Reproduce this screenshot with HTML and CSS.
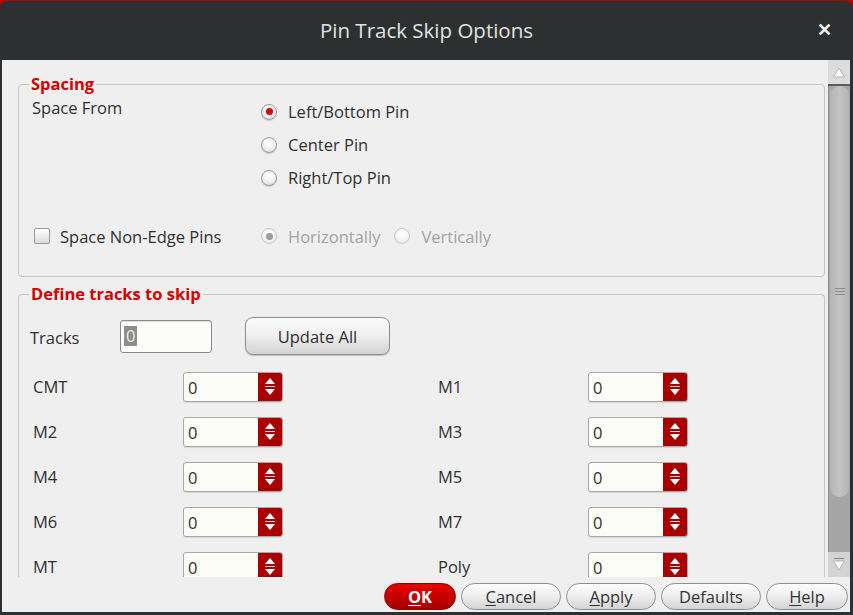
FILE: index.html
```html
<!DOCTYPE html>
<html>
<head>
<meta charset="utf-8">
<link rel="stylesheet" href="styles.css">
</head>
<body>
<div class="window">
  <header class="titlebar">
    <span></span>
    <span class="title">Pin Track Skip Options</span>
    <span class="close">&#x2715;</span>
  </header>
  <div class="client">
    <div class="viewport">
      <div class="scroll-content">
        <fieldset class="group spacing">
          <legend>Spacing</legend>
          <div class="sp-grid">
            <div class="sp-label">Space From</div>
            <div class="radio-list">
              <div class="radio-row"><span class="radio checked"></span><span>Left/Bottom Pin</span></div>
              <div class="radio-row"><span class="radio"></span><span>Center Pin</span></div>
              <div class="radio-row"><span class="radio"></span><span>Right/Top Pin</span></div>
            </div>
          </div>
          <div class="sp-grid nonedge">
            <div class="check-row"><span class="checkbox"></span><span>Space Non-Edge Pins</span></div>
            <div class="dir-radios">
              <span class="radio disabled checked"></span><span class="dis">Horizontally</span>
              <span class="radio disabled"></span><span class="dis">Vertically</span>
            </div>
          </div>
        </fieldset>
        <fieldset class="group tracks">
          <legend>Define tracks to skip</legend>
          <div class="tracks-row">
            <span class="tracks-label">Tracks</span>
            <div class="tracks-input"><span class="sel">0</span></div>
            <button class="btn update">Update All</button>
          </div>
          <div class="layer-grid">
            <span class="lname">CMT</span><div class="spin"><span class="val">0</span><span class="arrows"><svg width="24" height="28" viewBox="0 0 24 28"><path d="M7 11 L12 5 L17 11 Z" fill="#fff"/><path d="M7 13.5 H17" stroke="#f3d0d0" stroke-width="1"/><path d="M7 16 H17 L12 22 Z" fill="#fff"/></svg></span></div>
            <span></span>
            <span class="lname">M1</span><div class="spin"><span class="val">0</span><span class="arrows"><svg width="24" height="28" viewBox="0 0 24 28"><path d="M7 11 L12 5 L17 11 Z" fill="#fff"/><path d="M7 13.5 H17" stroke="#f3d0d0" stroke-width="1"/><path d="M7 16 H17 L12 22 Z" fill="#fff"/></svg></span></div>

            <span class="lname">M2</span><div class="spin"><span class="val">0</span><span class="arrows"><svg width="24" height="28" viewBox="0 0 24 28"><path d="M7 11 L12 5 L17 11 Z" fill="#fff"/><path d="M7 13.5 H17" stroke="#f3d0d0" stroke-width="1"/><path d="M7 16 H17 L12 22 Z" fill="#fff"/></svg></span></div>
            <span></span>
            <span class="lname">M3</span><div class="spin"><span class="val">0</span><span class="arrows"><svg width="24" height="28" viewBox="0 0 24 28"><path d="M7 11 L12 5 L17 11 Z" fill="#fff"/><path d="M7 13.5 H17" stroke="#f3d0d0" stroke-width="1"/><path d="M7 16 H17 L12 22 Z" fill="#fff"/></svg></span></div>

            <span class="lname">M4</span><div class="spin"><span class="val">0</span><span class="arrows"><svg width="24" height="28" viewBox="0 0 24 28"><path d="M7 11 L12 5 L17 11 Z" fill="#fff"/><path d="M7 13.5 H17" stroke="#f3d0d0" stroke-width="1"/><path d="M7 16 H17 L12 22 Z" fill="#fff"/></svg></span></div>
            <span></span>
            <span class="lname">M5</span><div class="spin"><span class="val">0</span><span class="arrows"><svg width="24" height="28" viewBox="0 0 24 28"><path d="M7 11 L12 5 L17 11 Z" fill="#fff"/><path d="M7 13.5 H17" stroke="#f3d0d0" stroke-width="1"/><path d="M7 16 H17 L12 22 Z" fill="#fff"/></svg></span></div>

            <span class="lname">M6</span><div class="spin"><span class="val">0</span><span class="arrows"><svg width="24" height="28" viewBox="0 0 24 28"><path d="M7 11 L12 5 L17 11 Z" fill="#fff"/><path d="M7 13.5 H17" stroke="#f3d0d0" stroke-width="1"/><path d="M7 16 H17 L12 22 Z" fill="#fff"/></svg></span></div>
            <span></span>
            <span class="lname">M7</span><div class="spin"><span class="val">0</span><span class="arrows"><svg width="24" height="28" viewBox="0 0 24 28"><path d="M7 11 L12 5 L17 11 Z" fill="#fff"/><path d="M7 13.5 H17" stroke="#f3d0d0" stroke-width="1"/><path d="M7 16 H17 L12 22 Z" fill="#fff"/></svg></span></div>

            <span class="lname">MT</span><div class="spin"><span class="val">0</span><span class="arrows"><svg width="24" height="28" viewBox="0 0 24 28"><path d="M7 11 L12 5 L17 11 Z" fill="#fff"/><path d="M7 13.5 H17" stroke="#f3d0d0" stroke-width="1"/><path d="M7 16 H17 L12 22 Z" fill="#fff"/></svg></span></div>
            <span></span>
            <span class="lname">Poly</span><div class="spin"><span class="val">0</span><span class="arrows"><svg width="24" height="28" viewBox="0 0 24 28"><path d="M7 11 L12 5 L17 11 Z" fill="#fff"/><path d="M7 13.5 H17" stroke="#f3d0d0" stroke-width="1"/><path d="M7 16 H17 L12 22 Z" fill="#fff"/></svg></span></div>
          </div>
        </fieldset>
      </div>
      <div class="scrollbar">
        <div class="sb-up"><svg width="22" height="24" viewBox="0 0 22 24"><path d="M5.5 17 L11 8 L16.5 17 Z" fill="#fafafa" stroke="#b5b5b5" stroke-width="1"/></svg></div>
        <div class="sb-trough">
          <div class="sb-thumb">
            <svg class="grip" width="12" height="10" viewBox="0 0 12 10"><path d="M1 1.5 H11 M1 4.5 H11 M1 7.5 H11" stroke="#8a8a8a" stroke-width="1"/></svg>
          </div>
        </div>
        <div class="sb-down"><svg width="22" height="25" viewBox="0 0 22 25"><path d="M6 6.5 H16" stroke="#888" stroke-width="1"/><path d="M5.5 9 H16.5 L11 18 Z" fill="#fafafa" stroke="#b5b5b5" stroke-width="1"/></svg></div>
      </div>
    </div>
    <div class="buttonbar">
      <button class="pill ok"><u>O</u>K</button>
      <button class="pill cancel"><u>C</u>ancel</button>
      <button class="pill apply"><u>A</u>pply</button>
      <button class="pill defaults">Defaults</button>
      <button class="pill help"><u>H</u>elp</button>
    </div>
  </div>
</div>
</body>
</html>
```

FILE: styles.css
```css
html, body {
  margin: 0;
  padding: 0;
  width: 853px;
  height: 615px;
  overflow: hidden;
  background: #b80000;
  font-family: "Open Sans", "Noto Sans", sans-serif;
  font-size: 16.5px;
  color: #2f2f2f;
}

.window {
  width: 853px;
  height: 615px;
  display: flex;
  flex-direction: column;
}

.titlebar {
  height: 56px;
  margin-top: 1px;
  flex: none;
  background: #2d3031;
  border-radius: 8px 8px 0 0;
  display: grid;
  grid-template-columns: 1fr auto 1fr;
  align-items: center;
  color: #e2e2e2;
}

.title {
  font-size: 20.5px;
  padding-top: 2px;
}

.close {
  justify-self: end;
  padding-right: 21px;
  font-size: 18px;
  font-weight: bold;
  color: #f2f2f2;
}

.client {
  flex: 1;
  background: #2d3031;
  padding: 3px 3px 3px 2px;
  display: flex;
  flex-direction: column;
  min-height: 0;
}

.viewport {
  height: 517px;
  flex: none;
  display: flex;
  background: #efefef;
}

.scroll-content {
  flex: 1;
  overflow: hidden;
  padding-top: 14px;
}

.group {
  margin: 0 3px 0 16px;
  padding: 0;
  border: 1px solid #c6c6c6;
  border-radius: 4px;
  min-width: 0;
}

.group legend {
  margin-left: 10px;
  padding: 0 2px;
  color: #d40000;
  font-weight: bold;
  font-size: 16.5px;
  line-height: 20px;
}

.sp-grid {
  display: grid;
  grid-template-columns: 229px auto;
  padding: 1px 0 0 13px;
}

.sp-label {
  margin-top: 3px;
  line-height: 20px;
}

.radio-row {
  height: 33px;
  display: flex;
  align-items: center;
  gap: 11px;
}

.radio {
  width: 16px;
  height: 16px;
  box-sizing: border-box;
  border-radius: 50%;
  border: 1px solid #9a9a9a;
  background: radial-gradient(circle at 50% 35%, #ffffff 0%, #f3f3f3 45%, #cfcfcf 100%);
  box-shadow: 0 1px 1px rgba(0,0,0,0.15);
  display: inline-flex;
  align-items: center;
  justify-content: center;
  flex: none;
}

.radio.checked::after {
  content: "";
  width: 7px;
  height: 7px;
  border-radius: 50%;
  background: #d80000;
}

.radio.disabled {
  border-color: #c6c6c6;
  background: radial-gradient(circle at 50% 35%, #ffffff 0%, #f5f5f5 50%, #dcdcdc 100%);
  box-shadow: none;
}

.radio.disabled.checked::after {
  background: #9e9e9e;
}

.nonedge {
  margin-top: 27px;
  padding-top: 0;
  padding-bottom: 25px;
  height: 30px;
  align-items: center;
}

.check-row {
  display: flex;
  align-items: center;
  gap: 10px;
  padding-left: 2px;
}

.checkbox {
  width: 16px;
  height: 16px;
  box-sizing: border-box;
  border: 1px solid #9a9a9a;
  border-radius: 2px;
  background: linear-gradient(#ffffff, #dadada);
  flex: none;
}

.dir-radios {
  display: flex;
  align-items: center;
}

.dir-radios .dis {
  color: #a3a3a3;
  margin-left: 11px;
  margin-right: 14px;
}

.tracks {
  margin-top: 7px;
  height: 320px;
  border-bottom: none;
}

.tracks-row {
  display: flex;
  align-items: center;
  height: 38px;
  margin-top: 13px;
  padding-left: 11px;
}

.tracks-label {
  width: 90px;
  padding-top: 3px;
}

.tracks-input {
  width: 92px;
  height: 33px;
  box-sizing: border-box;
  border: 1px solid #8a8a8a;
  border-radius: 3px;
  background: #fcfcfa;
  box-shadow: inset 0 1px 1px rgba(0,0,0,0.12);
  display: flex;
  align-items: center;
  padding-left: 3px;
}

.tracks-input .sel {
  background: #8c8c8c;
  color: #e8e8e8;
  padding: 0 2px;
  line-height: 20px;
}

.btn {
  font: inherit;
  color: #2f2f2f;
}

.update {
  margin-left: 33px;
  width: 145px;
  height: 38px;
  border: 1px solid #8e8e8e;
  border-radius: 8px;
  background: linear-gradient(#fbfbfb, #f0f0f0 45%, #d3d3d3);
  box-shadow: 0 1px 1px rgba(0,0,0,0.2);
}

.layer-grid {
  display: grid;
  grid-template-columns: 150px 100px 155px 150px 100px;
  grid-auto-rows: 30px;
  row-gap: 15px;
  margin-top: 17px;
  padding-left: 14px;
  align-items: center;
}

.lname {
  line-height: 20px;
}

.spin {
  height: 30px;
  box-sizing: border-box;
  display: flex;
  border: 1px solid #a8a8a8;
  border-radius: 3px;
  background: #fcfdf6;
  box-shadow: 0 1px 1px rgba(0,0,0,0.1);
  overflow: hidden;
}

.spin .val {
  flex: 1;
  padding-left: 4px;
  display: flex;
  align-items: center;
}

.spin .arrows {
  width: 24px;
  background: #a80000;
  display: flex;
  align-items: center;
}

.scrollbar {
  width: 22px;
  display: flex;
  flex-direction: column;
  background: #a6a6a6;
  box-shadow: inset 1px 0 0 #8d8d8d;
}

.sb-up {
  height: 24px;
  background: #dcdcdc;
  border-bottom: 2px solid #5d5d5d;
  display: flex;
}

.sb-trough {
  flex: 1;
  padding: 0 1px 0 2px;
}

.sb-thumb {
  height: 411px;
  background: linear-gradient(90deg, #b4b4b4, #c2c2c2 50%, #b4b4b4);
  border-radius: 9px;
  display: flex;
  align-items: center;
  justify-content: center;
}

.sb-down {
  height: 25px;
  background: #d3d3d3;
  display: flex;
}

.buttonbar {
  height: 35px;
  flex: none;
  background: #efefef;
  display: flex;
  justify-content: flex-end;
  align-items: flex-start;
  gap: 5px;
  padding: 6px 2px 0 0;
  box-sizing: border-box;
}

.pill {
  height: 27px;
  border: 1px solid #8e8e8e;
  border-radius: 14px;
  background: linear-gradient(#fdfdfd, #f0f0f0 45%, #d3d3d3);
  font: inherit;
  font-size: 16.5px;
  color: #333;
  padding: 0;
  line-height: 24px;
}

.pill u {
  text-underline-offset: 2px;
}

.ok {
  width: 72px;
  background: linear-gradient(#e60000, #c80000 50%, #a30000);
  border-color: #8a0000;
  color: #fff;
  font-weight: bold;
}

.cancel { width: 100px; }
.apply { width: 90px; }
.defaults { width: 100px; }
.help { width: 82px; }
```
